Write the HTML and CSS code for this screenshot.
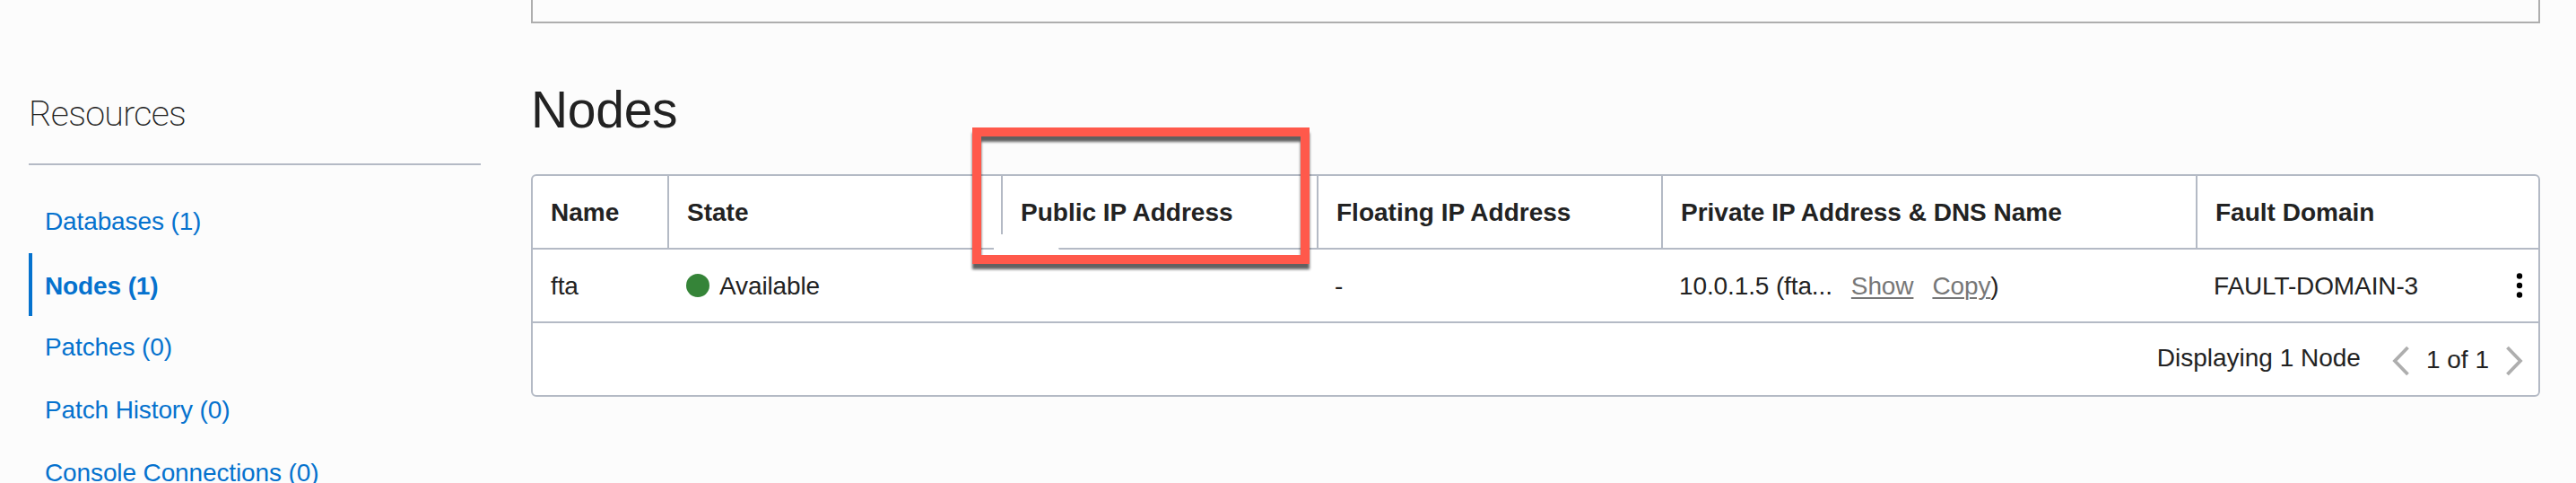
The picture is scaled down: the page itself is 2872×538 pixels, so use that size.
FILE: index.html
```html
<!DOCTYPE html>
<html lang="en">
<head>
<meta charset="utf-8">
<title>Nodes</title>
<link rel="stylesheet" href="styles.css">
</head>
<body>
<div class="page">
  <aside class="sidebar">
    <h2 class="sidebar-title">Resources</h2>
    <nav class="resource-list">
      <a class="resource">Databases (1)</a>
      <a class="resource resource-active">Nodes (1)</a>
      <a class="resource">Patches (0)</a>
      <a class="resource">Patch History (0)</a>
      <a class="resource">Console Connections (0)</a>
    </nav>
  </aside>
  <main class="content">
    <div class="panel-end"></div>
    <h1 class="title">Nodes</h1>
    <section class="table">
      <div class="row head">
        <div class="cell">Name</div>
        <div class="cell">State</div>
        <div class="cell">Public IP Address</div>
        <div class="cell">Floating IP Address</div>
        <div class="cell">Private IP Address &amp; DNS Name</div>
        <div class="cell">Fault Domain</div>
      </div>
      <div class="row">
        <div class="cell">fta</div>
        <div class="cell state"><span class="dot"></span><span class="state-text">Available</span></div>
        <div class="cell"></div>
        <div class="cell">-</div>
        <div class="cell"><span class="ip-text">10.0.1.5 (fta...</span><a class="action">Show</a><a class="action">Copy</a>)</div>
        <div class="cell fault"><span class="fault-text">FAULT-DOMAIN-3</span>
          <svg class="kebab" width="8" height="30" viewBox="0 0 8 30"><circle cx="4" cy="4.5" r="3.2"/><circle cx="4" cy="15" r="3.2"/><circle cx="4" cy="25.5" r="3.2"/></svg>
        </div>
      </div>
      <div class="footer">
        <span class="count">Displaying 1 Node</span>
        <svg class="chevron" width="20" height="34" viewBox="0 0 20 34"><path d="M17.5 2 3 17l14.500 15"/></svg>
        <span class="pages">1 of 1</span>
        <svg class="chevron" width="20" height="34" viewBox="0 0 20 34"><path d="M2.500 2 17 17 2.500 32"/></svg>
      </div>
    </section>
  </main>
  <div class="erased"></div>
  <div class="highlight"></div>
</div>
</body>
</html>
```
FILE: styles.css
```css
* { box-sizing: border-box; }
body {
  margin: 0;
  background: #fcfcfc;
  color: #222;
  font-family: "Liberation Sans", Arial, sans-serif;
  font-size: 28px;
}
.page {
  position: relative;
  display: grid;
  grid-template-columns: 504px 2240px;
  column-gap: 56px;
  height: 538px;
  padding-left: 32px;
  overflow: hidden;
}
.sidebar-title {
  height: 184px;
  margin: 0;
  padding-top: 104px;
  border-bottom: 2px solid #b4bac5;
  font: 200 39.400px/46px Roboto, sans-serif;
  letter-spacing: -0.700px;
}
.resource-list { display: flex; flex-direction: column; padding-top: 28px; }
.resource {
  height: 70px;
  padding: 0 0 0 18px;
  color: #0572ce;
  line-height: 70px;
  letter-spacing: -0.120px;
  white-space: nowrap;
}
.resource-active {
  padding: 2px 0 0 14px;
  border-left: 4px solid #0572ce;
  font-weight: bold;
}
.panel-end { height: 26px; border: 2px solid #aeaeae; border-top: 0; }
.title {
  height: 168px;
  margin: 0;
  padding-top: 51px;
  font-size: 57px;
  font-weight: normal;
  line-height: 90px;
  letter-spacing: -0.3px;
}
.table {
  height: 248px;
  border: 2px solid #b4bac5;
  border-radius: 6px;
  background: #fff;
}
.row {
  display: grid;
  grid-template-columns: 150px 372px 352px 384px 596px 1fr;
  height: 82px;
  border-bottom: 2px solid #b4bac5;
  line-height: 82px;
  white-space: nowrap;
}
.cell { height: 80px; padding-left: 20px; }
.head { font-weight: bold; }
.head .cell + .cell { border-left: 2px solid #b4bac5; }
.row:not(.head) { letter-spacing: -0.120px; }
.state { display: flex; align-items: center; }
.row .state { padding-left: 21px; }
.state-text, .fault-text { padding-top: 2px; }
.dot { width: 26px; height: 26px; margin-right: 11px; border-radius: 50%; background: #358438; }
.ip-text { margin-right: 21px; }
.action { color: #777; text-decoration: underline; text-decoration-thickness: 2px; text-underline-offset: 3px; }
.action + .action { margin-left: 21px; }
.fault { display: flex; align-items: center; justify-content: space-between; padding-right: 17px; }
.footer {
  display: flex;
  justify-content: flex-end;
  align-items: center;
  height: 80px;
  padding-right: 17px;
}
.count { padding-bottom: 2px; margin-right: 35px; }
.pages { margin: 2px 18px 0 18px; }
.chevron { margin-top: 4px; fill: none; stroke: #aeaeae; stroke-width: 3.800; }
.erased {
  position: absolute;
  left: 1108px;
  top: 261px;
  width: 74px;
  height: 20px;
  background: #fff;
  clip-path: polygon(0 0, 66px 0, 74px 20px, 0 20px);
}
.highlight {
  position: absolute;
  left: 1084px;
  top: 142px;
  width: 376px;
  height: 152px;
  border: 10px solid #ff594b;
  filter: drop-shadow(0 6px 1.500px rgba(0, 0, 0, 0.62));
}
```
